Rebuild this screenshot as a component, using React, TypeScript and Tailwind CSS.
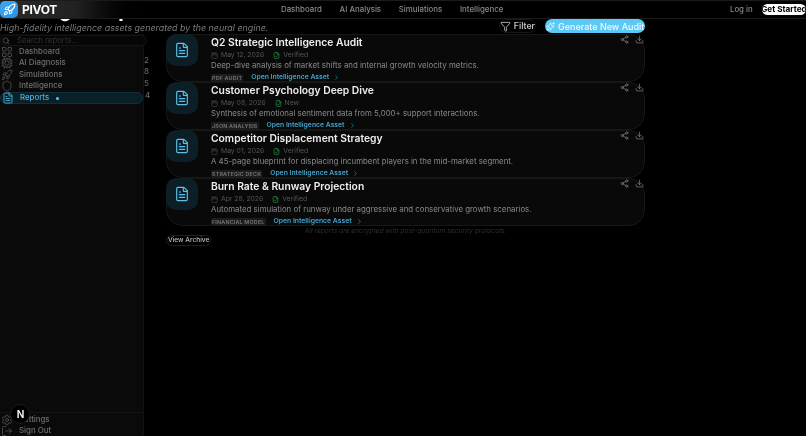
import { Calendar, ChevronRight, Cpu, Download, FileCheck, FileText, Filter, LayoutGrid, LogOut, Rocket, Search, Settings, Share2, Shield, Sparkles } from "lucide-react";

const side = [
  { label: "Dashboard", Icon: LayoutGrid, count: "" },
  { label: "AI Diagnosis", Icon: Cpu, count: "2" },
  { label: "Simulations", Icon: Rocket, count: "8" },
  { label: "Intelligence", Icon: Shield, count: "5" },
];

const reports = [
  { title: "Q2 Strategic Intelligence Audit", date: "May 12, 2026", status: "Verified", desc: "Deep-dive analysis of market shifts and internal growth velocity metrics.", tag: "PDF AUDIT" },
  { title: "Customer Psychology Deep Dive", date: "May 08, 2026", status: "New", desc: "Synthesis of emotional sentiment data from 5,000+ support interactions.", tag: "JSON ANALYSIS" },
  { title: "Competitor Displacement Strategy", date: "May 01, 2026", status: "Verified", desc: "A 45-page blueprint for displacing incumbent players in the mid-market segment.", tag: "STRATEGIC DECK" },
  { title: "Burn Rate & Runway Projection", date: "Apr 28, 2026", status: "Verified", desc: "Automated simulation of runway under aggressive and conservative growth scenarios.", tag: "FINANCIAL MODEL" },
];

export default function App() {
  return (
    <div className="relative flex h-[436px] w-[806px] flex-col overflow-hidden bg-black font-['Inter',sans-serif] blur-[0.35px]">
      <header className="absolute left-0 top-0 z-10 flex h-[19px] w-full items-center border-y border-[#1a1a1a] bg-black">
        <div className="absolute inset-y-0 left-0 w-[150px] bg-gradient-to-r from-[#2a2a2a] via-[#222222] to-black" />
        <div className="relative flex h-[17px] w-[18px] items-center justify-center rounded-[5px] bg-gradient-to-br from-[#3fa9f5] to-[#2a8fe0]">
          <Rocket className="h-[13px] w-[13px] text-white" strokeWidth={2} />
        </div>
        <span className="relative ml-1 text-[12px] font-bold leading-none tracking-tight text-white">PIVOT</span>
        <nav className="absolute left-[281px] flex gap-[17.7px] text-[7.85px] font-medium leading-none text-[#8a8a8a]">
          <span>Dashboard</span>
          <span>AI Analysis</span>
          <span>Simulations</span>
          <span>Intelligence</span>
        </nav>
        <span className="absolute left-[730px] text-[7.8px] font-medium leading-none text-[#8a8a8a]">Log in</span>
        <span className="absolute left-[762px] flex h-[11px] w-[44px] items-center justify-center overflow-hidden whitespace-nowrap rounded-full bg-white text-[8.2px] font-bold leading-none text-black">Get Started</span>
      </header>

      <div className="flex h-[34px] w-[645px] flex-col">
        <h1 className="h-[21px] text-[20px] font-bold leading-[20px] text-white">Strategic Reports</h1>
        <div className="flex items-center justify-between">
          <p className="text-[8.9px] italic leading-[13px] text-[#7a7a7a]">High-fidelity intelligence assets generated by the neural engine.</p>
          <div className="-mt-[3px] flex items-center gap-[9px]">
            <div className="flex h-[14px] items-center gap-[3px] rounded-full border border-[#161616] text-[8.8px] font-medium leading-none text-[#cfcfcf]">
              <Filter className="h-[11px] w-[11px]" strokeWidth={1.75} />
              <span>Filter</span>
            </div>
            <div className="flex h-[14px] w-[100px] items-center gap-[3px] overflow-hidden whitespace-nowrap rounded-full bg-[#5cc8f6] pl-[1px] text-[9px] font-medium leading-none text-[#f0fbff]">
              <Sparkles className="h-[9px] w-[9px] shrink-0" strokeWidth={2} />
              <span>Generate New Audit</span>
            </div>
          </div>
        </div>
      </div>

      <div className="flex min-h-0 flex-1">
        <aside className="flex w-[144px] shrink-0 flex-col border-r border-[#121212] bg-[#0a0a0a]">
          <div className="mt-[1px] flex h-[11px] w-[147px] shrink-0 items-center gap-[7px] rounded-full border border-[#141414] bg-[#060606] pl-[1px] text-[7.8px] leading-none text-[#333333]">
            <Search className="h-[8px] w-[8px] text-[#666666]" strokeWidth={2} />
            <span>Search reports...</span>
          </div>
          <div className="flex flex-col">
            {side.map(({ label, Icon, count }) => (
              <div key={label} className="relative flex h-[11.5px] items-center gap-[6px] pl-[1px] text-[7.85px] font-medium leading-none text-[#6f6f6f]">
                <Icon className="h-[12px] w-[12px] text-[#5a5a5a]" strokeWidth={1.5} />
                <span>{label}</span>
                {count && <span className="absolute left-[144px] top-[-2px] text-[8px] text-[#666666]">{count}</span>}
              </div>
            ))}
            <div className="relative flex h-[12px] items-center gap-[6px] rounded-full border border-[#12303c] bg-[#0a2029] pl-[1px] text-[7.85px] font-medium leading-none text-[#4fb3d9]">
              <FileText className="h-[12px] w-[12px]" strokeWidth={1.75} />
              <span>Reports</span>
              <span className="ml-[1px] h-[3px] w-[3px] rounded-full bg-[#5cc8f6]" />
              <span className="absolute left-[144px] top-[-2px] text-[8px] text-[#666666]">4</span>
            </div>
          </div>
          <div className="mt-auto flex flex-col border-t border-[#141414] pt-[1px]">
            <div className="flex h-[11px] items-center gap-[6px] pl-[1px] text-[7.85px] font-medium leading-none text-[#6f6f6f]">
              <Settings className="h-[12px] w-[12px] text-[#5a5a5a]" strokeWidth={1.5} />
              <span>Settings</span>
            </div>
            <div className="flex h-[11px] items-center gap-[6px] pl-[1px] text-[7.85px] font-medium leading-none text-[#6f6f6f]">
              <LogOut className="h-[12px] w-[12px] text-[#5a5a5a]" strokeWidth={1.5} />
              <span>Sign Out</span>
            </div>
          </div>
        </aside>

        <main className="ml-[22px] flex w-[479px] flex-col">
          {reports.map((r) => (
            <article key={r.title} className="relative flex h-[48px] shrink-0 gap-[13px] rounded-2xl border border-[#171717] bg-[#090909]">
              <div className="-ml-px -mt-px flex h-[32px] w-[32px] shrink-0 items-center justify-center rounded-[10px] bg-[#0c1f27]">
                <FileText className="h-[16px] w-[16px] text-[#5cc0e8]" strokeWidth={1.75} />
              </div>
              <div className="flex min-w-0 flex-col">
                <h2 className="h-[15px] shrink-0 text-[10.3px] font-semibold leading-[15px] text-[#ededed]">{r.title}</h2>
                <div className="flex h-[10px] shrink-0 items-center gap-[3px] text-[6.8px] leading-none text-[#555555]">
                  <Calendar className="h-[7px] w-[7px]" strokeWidth={1.75} />
                  <span>{r.date}</span>
                  <FileCheck className="ml-[6px] h-[7px] w-[7px] text-[#2fa84f]" strokeWidth={2} />
                  <span>{r.status}</span>
                </div>
                <p className="h-[12px] shrink-0 whitespace-nowrap text-[7.85px] leading-[11px] text-[#8a8a8a]">{r.desc}</p>
                <div className="flex h-[11px] shrink-0 items-center gap-[8px]">
                  <span className="rounded-[2px] bg-[#1c1c1c] px-[1px] text-[5.4px] font-semibold leading-[8px] tracking-[0.18px] text-[#777777]">{r.tag}</span>
                  <span className="flex items-center gap-[3px] text-[6.8px] font-semibold leading-none text-[#43a3cc]">
                    Open Intelligence Asset
                    <ChevronRight className="ml-[1px] h-[7px] w-[7px]" strokeWidth={2} />
                  </span>
                </div>
              </div>
              <div className="absolute right-0 top-0 flex gap-[6px] text-[#8a8a8a]">
                <Share2 className="h-[9px] w-[9px]" strokeWidth={1.75} />
                <Download className="h-[9px] w-[9px]" strokeWidth={1.75} />
              </div>
            </article>
          ))}
          <p className="h-[10px] text-center text-[6.7px] italic leading-[10px] text-[#2e2e2e]">All reports are encrypted with post-quantum security protocols.</p>
          <div className="-mt-[1px] flex">
            <span className="rounded-full border border-[#202020] px-[1px] text-[6.6px] font-medium leading-[9px] text-[#bdbdbd]">View Archive</span>
          </div>
        </main>
      </div>

      <div className="absolute left-[10px] top-[404px] flex h-[20px] w-[20px] items-center justify-center rounded-full border border-[#1c1c1c] bg-black pl-[1px] text-[10px] font-semibold text-white">N</div>
    </div>
  );
}
